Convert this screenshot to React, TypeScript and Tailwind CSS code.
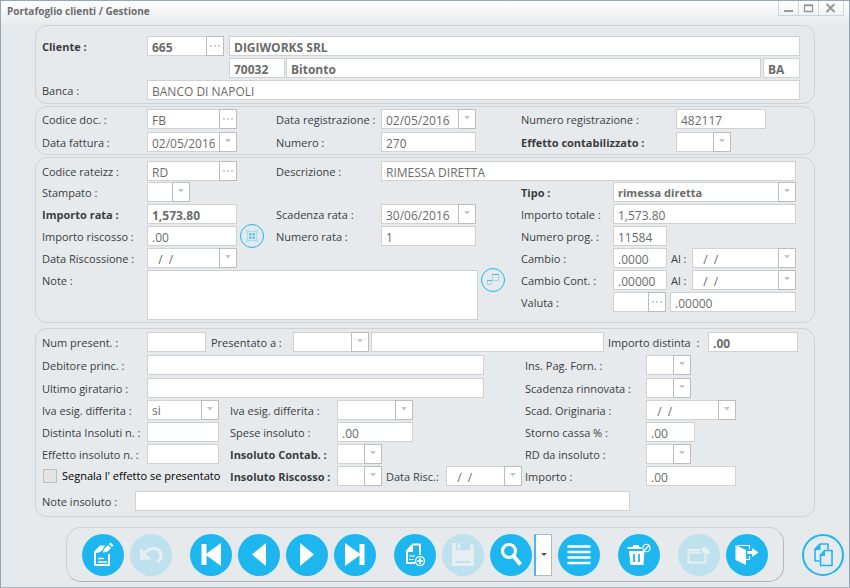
import { useId } from "react";
import type { ReactNode } from "react";

const BOX =
  "h-5 min-w-0 border border-[#d0d1d2] bg-white px-1 pt-0.5 leading-4 text-[#6b6b6b] outline-none rounded-none";
const SIDE =
  "flex h-5 w-[18px] shrink-0 items-center justify-center border border-[#bcbdbe] bg-white";

type FieldProps = {
  label?: string;
  name?: string;
  labelClass?: string;
  className?: string;
  value?: string;
  bold?: boolean;
};

function Label({ id, text, className = "", bold }: { id: string; text: string; className?: string; bold?: boolean }) {
  return (
    <label
      htmlFor={id}
      className={`h-5 shrink-0 pt-px leading-5 whitespace-nowrap ${bold ? "font-bold" : ""} ${className}`}
    >
      {text}
    </label>
  );
}

function Arrow() {
  return (
    <svg width="6" height="4" viewBox="0 0 6 4" className="-mt-0.5" aria-hidden="true">
      <path d="M0 0h6L3 3.5z" fill="#c4c5c6" />
    </svg>
  );
}

function Text({ label, name, labelClass, className = "", value = "", bold }: FieldProps) {
  const id = useId();
  return (
    <>
      {label && <Label id={id} text={label} className={labelClass} bold={bold} />}
      <input
        id={id}
        aria-label={label ? undefined : name}
        defaultValue={value}
        className={`${BOX} text-xs ${bold ? "font-bold" : ""} ${className}`}
      />
    </>
  );
}

function Lookup({ label, name, labelClass, className = "", value = "", bold, date }: FieldProps & { date?: boolean }) {
  const id = useId();
  return (
    <>
      {label && <Label id={id} text={label} className={labelClass} bold={bold} />}
      <span className={`flex shrink-0 ${className}`}>
        <input
          id={id}
          aria-label={label ? undefined : name}
          defaultValue={value}
          className={`${BOX} flex-1 border-r-0 text-xs whitespace-pre ${bold ? "font-bold" : ""}`}
        />
        <button type="button" aria-label={date ? "Calendario" : "Cerca"} className={SIDE}>
          {date ? (
            <Arrow />
          ) : (
            <svg width="10" height="2" viewBox="0 0 10 2" aria-hidden="true">
              <path d="M0 0h2v2H0zM4 0h2v2H4zM8 0h2v2H8z" fill="#cfd0d1" />
            </svg>
          )}
        </button>
      </span>
    </>
  );
}

function Combo({ label, id, labelClass, className = "", value = "", bold, boldValue }: FieldProps & { id?: string; boldValue?: boolean }) {
  const ownId = useId();
  const selectId = id ?? ownId;
  return (
    <>
      {label && <Label id={selectId} text={label} className={labelClass} bold={bold} />}
      <span className={`relative flex ${className}`}>
        <select
          id={selectId}
          defaultValue={value}
          className={`${BOX} w-full appearance-none ${boldValue ? "text-[11px] font-bold" : "text-xs"}`}
        >
          <option>{value}</option>
        </select>
        <span className={`${SIDE} pointer-events-none absolute top-0 right-0`}>
          <Arrow />
        </span>
      </span>
    </>
  );
}

function Panel({ children, className = "" }: { children: ReactNode; className?: string }) {
  return (
    <section className={`flex flex-col rounded-[12px] border border-[#d0d3d5] pl-1.5 ${className}`}>{children}</section>
  );
}

function Tool({ title, disabled, outline, children }: { title: string; disabled?: boolean; outline?: boolean; children: ReactNode }) {
  const tone = outline
    ? "border-2 border-[#1eb6ef] text-[#1eb6ef]"
    : disabled
      ? "bg-[#bfe1ed] text-[#e6eef2]"
      : "bg-[#1eb6ef] text-white";
  return (
    <button
      type="button"
      title={title}
      aria-label={title}
      disabled={disabled}
      className={`flex size-[42px] shrink-0 items-center justify-center rounded-full ${tone}`}
    >
      <svg width="42" height="42" viewBox="0 0 42 42" fill="none" stroke="currentColor" className="shrink-0" aria-hidden="true">
        {children}
      </svg>
    </button>
  );
}

function MiniTool({ title, children }: { title: string; children: ReactNode }) {
  return (
    <button
      type="button"
      title={title}
      aria-label={title}
      className="-my-0.5 flex size-6 shrink-0 items-center justify-center rounded-full border border-[#1eb6ef]"
    >
      <svg width="24" height="24" viewBox="0 0 24 24" fill="none" className="shrink-0" aria-hidden="true">
        {children}
      </svg>
    </button>
  );
}

function TitleBar() {
  return (
    <header className="flex h-6 items-start justify-between bg-linear-to-b from-white to-[#e6eaec] pr-[5px] pl-1.5 text-[#6a6d70]">
      <h1 className="text-[10px] leading-[21px] font-bold">Portafoglio clienti / Gestione</h1>
      <div className="flex h-[15px] border-x border-b border-[#c9d5e1]">
        <button type="button" aria-label="Riduci" className="w-5 border-r border-[#c9d5e1]">
          <svg width="19" height="14" viewBox="0 0 19 14" aria-hidden="true">
            <path d="M5 9h9v2H5z" fill="#999" />
          </svg>
        </button>
        <button type="button" aria-label="Ingrandisci" className="w-5 border-r border-[#c9d5e1]">
          <svg width="19" height="14" viewBox="0 0 19 14" aria-hidden="true">
            <path d="M5.500 4.500h8v6h-8zM5 4h9" fill="none" stroke="#999" strokeWidth="1.300" />
          </svg>
        </button>
        <button type="button" aria-label="Chiudi" className="w-6">
          <svg width="23" height="14" viewBox="0 0 23 14" aria-hidden="true">
            <path d="M7.500 3l8 8M15.500 3l-8 8" stroke="#999" strokeWidth="2" />
          </svg>
        </button>
      </div>
    </header>
  );
}

function Toolbar() {
  return (
    <footer className="mt-2.5 flex items-center justify-end gap-[18px] pr-[5px] pb-[5px]">
      <div className="flex h-[55px] items-center gap-[18px] rounded-[15px] border border-[#cfd2d4] border-r-[#b4b8bb] border-b-[#aeb2b6] px-[15px]">
        <div className="flex gap-1.5">
          <Tool title="Modifica">
            <path d="M19 12l-6 6v13h14V20" strokeWidth="2" strokeLinejoin="round" />
            <path d="M12 19l7-7.500h4l-3 5-3 2z" fill="currentColor" stroke="none" />
            <path d="M21 18.500l1-3.500 4-4 3 3-4 4z" fill="currentColor" stroke="none" />
            <path d="M27 10l1.500-1.500 3 3L30 13z" fill="currentColor" stroke="none" />
            <path d="M16 24.500h6M16 28h9" strokeWidth="1.300" />
          </Tool>
          <Tool title="Annulla" disabled>
            <path d="M10 14v11.500h12z" fill="currentColor" stroke="none" />
            <path d="M15 18.500c7-7.500 16-3.500 16 3 0 3-1.500 5.500-4 6.500" strokeWidth="3" />
          </Tool>
        </div>
        <div className="flex gap-1.5">
          <Tool title="Primo">
            <path d="M31 9v23L16.500 21.500V31H11.500V10h5v9.500z" fill="currentColor" stroke="none" />
          </Tool>
          <Tool title="Precedente">
            <path d="M28 9v23L14 20.500z" fill="currentColor" stroke="none" />
          </Tool>
          <Tool title="Successivo">
            <path d="M14 9v23l14-11.500z" fill="currentColor" stroke="none" />
          </Tool>
          <Tool title="Ultimo">
            <path d="M11 9v23l14.500-10.500V31h5V10h-5v9.500z" fill="currentColor" stroke="none" />
          </Tool>
        </div>
        <div className="flex gap-1.5">
          <Tool title="Nuovo">
            <path d="M21 29H13V17l6-6.500h7V21" strokeWidth="2" strokeLinejoin="round" />
            <path d="M12 18l7-8.500V18z" fill="currentColor" stroke="none" />
            <path d="M15 22h6M15 25.500h5" strokeWidth="1.200" />
            <circle cx="26" cy="27" r="4.500" strokeWidth="1.300" />
            <path d="M26 24v6M23 27h6" strokeWidth="1.600" />
          </Tool>
          <Tool title="Salva" disabled>
            <path d="M10 9h4v7h14V9h1l3 3v20H10z" fill="currentColor" stroke="none" />
            <path d="M17 9v6" strokeWidth="2.500" />
            <path d="M13.500 28h15" stroke="#bfe1ed" strokeWidth="2" />
          </Tool>
          <div className="flex gap-0.5">
            <Tool title="Cerca">
              <circle cx="19" cy="17" r="6.500" strokeWidth="3.200" />
              <path d="M23.500 22l7 8.500" strokeWidth="4" />
            </Tool>
            <button
              type="button"
              aria-label="Opzioni di ricerca"
              className="flex h-[42px] w-[18px] items-center justify-center border-2 border-t border-r border-b border-[#b9b9be] border-t-[#8fc6ea] border-l-[#4fb4ec] bg-white"
            >
              <svg width="6" height="3" viewBox="0 0 6 3" aria-hidden="true">
                <path d="M0 0h6L3 3z" fill="#555" />
              </svg>
            </button>
          </div>
          <Tool title="Elenco">
            <path d="M9.500 12.500h23M9.500 18h23M9.500 23.500h23M9.500 29h23" strokeWidth="2.700" />
          </Tool>
        </div>
        <Tool title="Elimina">
          <path d="M9.500 13h5l1-2h5l1 2h2v2h-14zM11 17h15.500l-1 14h-13z" fill="currentColor" stroke="none" />
          <path d="M16 20v8M21 20v8" stroke="#1eb6ef" strokeWidth="1.800" />
          <circle cx="28.500" cy="14" r="3.600" strokeWidth="1.100" />
          <path d="M26 16.500l5-5" strokeWidth="1.100" />
        </Tool>
        <div className="flex gap-1.5">
          <Tool title="Archivia" disabled>
            <path d="M27.500 21v7.500h-17V16H22M10 18.500h13" strokeWidth="2" />
            <path d="M23 14c4-2 8 0 9 6-5 1.500-8-1-9-6z" fill="currentColor" stroke="none" />
          </Tool>
          <Tool title="Esci">
            <path d="M9.500 11l10.500 5v15L9.500 26z" fill="currentColor" stroke="none" />
            <path d="M12 11.500h11.500V15M20 25.500h3.500V22" strokeWidth="1.200" />
            <path d="M21.500 17H26v-3l6.500 4.500L26 23v-3h-4.500z" fill="currentColor" stroke="none" />
          </Tool>
        </div>
      </div>
      <Tool title="Copia" outline>
        <path d="M17.500 27H13V15l5-5h8v5.500" strokeWidth="1.600" strokeLinejoin="round" />
        <path d="M12.500 16l6-6.500V16z" fill="currentColor" stroke="none" />
        <path d="M18.500 21l4-4.500H30V31.500H18.500z" strokeWidth="1.600" strokeLinejoin="round" />
        <path d="M18 22l5-5.500V22z" fill="currentColor" stroke="none" />
      </Tool>
    </footer>
  );
}

export default function App() {
  const noteId = useId();
  const riscossoId = useId();
  const insolutoId = useId();
  return (
    <div className="min-h-screen border-x border-t border-b-2 border-[#94a7ba] border-b-[#a9b5bf] bg-[#e6eaed] font-['Open_Sans',sans-serif] text-[11px] text-[#3a3d3f]">
      <TitleBar />
      <form className="mx-[34px] flex flex-col">
        <Panel className="gap-0.5 pt-2.5 pr-3.5 pb-[3px]">
          <div className="flex">
            <Lookup label="Cliente :" labelClass="w-[105px]" className="mr-[5px] w-[77px]" value="665" bold />
            <Text name="Ragione sociale" className="flex-1" value="DIGIWORKS SRL" bold />
          </div>
          <div className="flex gap-px pl-[187px]">
            <Text name="CAP" className="w-14" value="70032" bold />
            <Text name="Città" className="mr-px flex-1" value="Bitonto" bold />
            <Text name="Provincia" className="w-[37px]" value="BA" bold />
          </div>
          <div className="flex">
            <Text label="Banca :" labelClass="w-[105px]" className="flex-1" value="BANCO DI NAPOLI" />
          </div>
        </Panel>

        <Panel className="mt-0.5 pt-0.5 pb-0.5">
          <div className="grid grid-cols-[105px_129px_105px_140px_155px_1fr] gap-y-[3px]">
            <Lookup label="Codice doc. :" className="w-[90px]" value="FB" />
            <Lookup label="Data registrazione :" className="w-[95px]" value="02/05/2016" date />
            <Text label="Numero registrazione :" className="w-[90px]" value="482117" />
            <Lookup label="Data fattura :" className="w-[90px]" value="02/05/2016" date />
            <Text label="Numero :" className="w-[95px]" value="270" />
            <Combo label="Effetto contabilizzato :" className="w-[55px]" bold />
          </div>
        </Panel>

        <Panel className="mt-0.5 gap-px pt-[3px] pr-[18px] pb-0.5">
          <div className="flex">
            <Lookup label="Codice rateizz :" labelClass="w-[105px]" className="mr-[39px] w-[90px]" value="RD" />
            <Text label="Descrizione :" labelClass="w-[105px]" className="flex-1" value="RIMESSA DIRETTA" />
          </div>
          <div className="flex">
            <div className="grid w-[479px] shrink-0 grid-cols-[105px_129px_105px_1fr] content-start gap-y-0.5">
              <Combo label="Stampato :" className="col-span-3 w-[43px]" />
              <Text label="Importo rata :" className="w-[90px]" value="1,573.80" bold />
              <Lookup label="Scadenza rata :" className="w-[95px]" value="30/06/2016" date />
              <Label id={riscossoId} text="Importo riscosso :" />
              <div className="flex gap-[3px]">
                <input id={riscossoId} defaultValue=".00" className={`${BOX} w-[90px] text-xs`} />
                <MiniTool title="Calcola">
                  <path d="M7.500 7.500h9v9h-9zM6 9V6h3M18 9V6h-3M6 15v3h3M18 15v3h-3" stroke="#a6def5" />
                  <path d="M9 9h2.500v2.500H9zM12.500 9H15v2.500h-2.500zM9 12.500h2.500V15H9zM12.500 12.500H15V15h-2.500z" fill="#5cc8f2" />
                </MiniTool>
              </div>
              <Text label="Numero rata :" className="w-[95px]" value="1" />
              <Lookup label="Data Riscossione :" className="col-span-3 w-[90px]" value="  /  /" date />
              <Label id={noteId} text="Note :" />
              <div className="col-span-3 flex gap-[3px]">
                <textarea
                  id={noteId}
                  className="h-[50px] w-[331px] resize-none border border-[#d0d1d2] bg-white px-1 text-xs outline-none"
                />
                <MiniTool title="Espandi">
                  <path d="M11.500 6.500h6v6h-6zM6.500 12.500h4v4h-4z" stroke="#9adaf4" />
                  <path d="M11 6.500h7M6 12.500h5" stroke="#45c1f1" />
                </MiniTool>
              </div>
            </div>
            <div className="grid min-w-0 flex-1 grid-cols-[92px_54px_25px_minmax(0,1fr)] content-start gap-y-0.5">
              <Combo label="Tipo :" className="col-span-3" value="rimessa diretta" bold boldValue />
              <Text label="Importo totale :" className="col-span-3" value="1,573.80" />
              <Text label="Numero prog. :" value="11584" />
              <Text label="Cambio :" labelClass="col-start-1" value=".0000" />
              <Lookup label="Al :" labelClass="pl-1" value="  /  /" date />
              <Text label="Cambio Cont. :" value=".00000" />
              <Lookup label="Al :" labelClass="pl-1" value="  /  /" date />
              <Lookup label="Valuta :" className="w-[53px]" />
              <div className="col-span-2 flex pl-[3px]">
                <Text name="Cambio valuta" className="flex-1" value=".00000" />
              </div>
            </div>
          </div>
        </Panel>

        <Panel className="mt-[5px] gap-[5px] pt-[3px] pr-4 pb-[5px]">
          <div className="flex flex-col gap-0.5">
            <div className="flex flex-col gap-[3px]">
              <div className="flex">
                <Text label="Num present. :" labelClass="w-[105px]" className="mr-[5px] w-[59px]" />
                <Combo label="Presentato a :" labelClass="w-[82px]" className="mr-0.5 w-[76px]" />
                <Text name="Descrizione presentazione" className="mr-1 flex-1" />
                <Text label="Importo distinta  :" labelClass="w-[100px] whitespace-pre" className="w-[90px] font-bold" value=".00" />
              </div>
              <div className="grid grid-cols-[105px_378px_121px_1fr] gap-y-[3px]">
                <Text label="Debitore princ. :" className="w-[337px]" />
                <Combo label="Ins. Pag. Forn. :" className="w-[45px]" />
                <Text label="Ultimo giratario :" className="w-[337px]" />
                <Combo label="Scadenza rinnovata :" className="w-[45px]" />
              </div>
            </div>
            <div className="grid grid-cols-[105px_83px_107px_188px_121px_1fr] gap-y-0.5">
              <Combo label="Iva esig. differita :" className="w-[72px]" value="si" />
              <Combo label="Iva esig. differita :" className="w-[76px]" />
              <Lookup label="Scad. Originaria :" className="w-[90px]" value="  /  /" date />
              <Text label="Distinta Insoluti n. :" className="w-[72px]" />
              <Text label="Spese insoluto :" className="w-[76px]" value=".00" />
              <Text label="Storno cassa % :" className="w-[49px]" value=".00" />
              <Text label="Effetto insoluto n. :" className="w-[72px]" />
              <Combo label="Insoluto Contab. :" className="w-[45px]" bold />
              <Combo label="RD da insoluto :" className="w-[45px]" />
              <label className="col-span-2 flex items-center gap-[5px] pl-px whitespace-nowrap text-black">
                <input
                  type="checkbox"
                  className="size-3.5 shrink-0 appearance-none border border-[#bdbebf] bg-[#e4e4e4] checked:bg-[#1eb6ef]"
                />
                Segnala l' effetto se presentato
              </label>
              <Label id={insolutoId} text="Insoluto Riscosso :" bold />
              <div className="flex">
                <Combo id={insolutoId} className="mr-1 w-[45px]" />
                <Lookup label="Data Risc.:" labelClass="w-[60px]" className="w-[76px]" value="  /  /" date />
              </div>
              <Text label="Importo :" className="w-[90px]" value=".00" />
            </div>
          </div>
          <div className="flex">
            <Text label="Note insoluto :" labelClass="w-[93px]" className="w-[495px]" />
          </div>
        </Panel>
      </form>
      <Toolbar />
    </div>
  );
}
